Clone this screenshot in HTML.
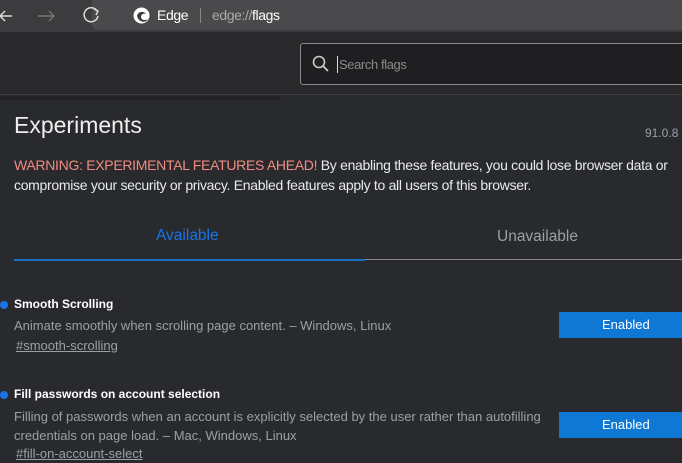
<!DOCTYPE html>
<html><head><style>
*{margin:0;padding:0;box-sizing:border-box}
body{width:682px;height:463px;overflow:hidden;background:#292a2d;font-family:"Liberation Sans",sans-serif;color:#e8eaed;position:relative}
.abs{position:absolute;white-space:nowrap}
#top{position:absolute;left:0;top:0;width:682px;height:32px;background:#3c3c3e}
#addr{position:absolute;left:92px;top:0;width:600px;height:30px;background:#4a4a4c;border-radius:0 0 0 6px}
#tb{position:absolute;left:0;top:32px;width:682px;height:63px;background:#29292b;border-bottom:1px solid #3c3c3e}
#search{position:absolute;left:300px;top:43px;width:390px;height:42px;border:1px solid #8a8a8c;border-radius:3px;background:#1f1f21}
.t{letter-spacing:-0.4px}
.btn{position:absolute;left:559px;width:130px;height:26px;background:#0f78d4;color:#fff;font-size:13px;line-height:26px;padding-left:43px}
.dot{position:absolute;left:0;width:8px;height:8px;border-radius:50%;background:#1a73e8}
.d{font-size:13px;color:#9aa0a6;letter-spacing:0}
</style></head><body>
<div id="top"></div>
<div id="addr"></div>
<svg class="abs" style="left:0;top:6px" width="110" height="20"><path d="M12 10H0M5 5L0 10 5 15" stroke="#ddd" stroke-width="1.4" fill="none"/><path d="M38 10H54M49 5L54 10 49 15" stroke="#777" stroke-width="1.4" fill="none"/><path d="M97 5A7 7 0 1 0 98 10" stroke="#ddd" stroke-width="1.5" fill="none"/><path d="M94 3L98 5 96 9" stroke="#ddd" stroke-width="1.4" fill="none"/></svg>
<svg class="abs" style="left:133px;top:7px" width="17" height="17"><circle cx="8.5" cy="8.5" r="8" fill="#fff"/><path d="M4 9a5 5 0 0 1 9-2c-2-1-5 0-5 3 0 3 4 4 7 2-2 4-9 4-11-3z" fill="#3c3c3e"/></svg>
<div class="abs t" style="left:157px;top:7px;font-size:14px;color:#fff">Edge</div>
<div class="abs" style="left:200px;top:8px;width:1px;height:15px;background:#888"></div>
<div class="abs t" style="left:212px;top:7px;font-size:14px;color:#aaa">edge://<span style="color:#fff">flags</span></div>
<div id="tb"></div>
<div class="abs" style="left:0;top:96px;width:280px;height:4px;background:#222224"></div>
<div id="search"></div>
<svg class="abs" style="left:312px;top:55px" width="18" height="18"><circle cx="7" cy="7" r="5.5" stroke="#ccc" stroke-width="1.6" fill="none"/><path d="M11 11L16 16" stroke="#ccc" stroke-width="1.8"/></svg>
<div class="abs" style="left:337px;top:56px;width:1px;height:17px;background:#ddd"></div>
<div class="abs t" style="left:339px;top:57px;font-size:13px;color:#8a8a8c">Search flags</div>
<div class="abs" style="left:14px;top:112px;font-size:23px;color:#eee">Experiments</div>
<div class="abs" style="left:645px;top:126px;font-size:12px;color:#9aa0a6">91.0.8</div>
<div class="abs" style="left:14px;top:155px;font-size:14px;line-height:20px;width:672px;white-space:normal;letter-spacing:-0.3px"><span style="color:#f28b82">WARNING: EXPERIMENTAL FEATURES AHEAD!</span> By enabling these features, you could lose browser data or compromise your security or privacy. Enabled features apply to all users of this browser.</div>
<div class="abs" style="left:156px;top:227px;font-size:15.5px;color:#1a73e8">Available</div>
<div class="abs" style="left:497px;top:228px;font-size:15.5px;color:#9aa0a6">Unavailable</div>
<div class="abs" style="left:14px;top:259px;width:351px;height:2px;background:#1a6fc4"></div>
<div class="abs" style="left:365px;top:259px;width:320px;height:1px;background:#888"></div>
<div class="dot" style="top:301px"></div>
<div class="abs" style="left:14px;top:297px;font-size:12px;font-weight:bold;color:#fff">Smooth Scrolling</div>
<div class="abs d" style="left:14px;top:318px">Animate smoothly when scrolling page content. – Windows, Linux</div>
<div class="abs d" style="left:16px;top:338px;text-decoration:underline">#smooth-scrolling</div>
<div class="btn" style="top:312px">Enabled</div>
<div class="dot" style="top:391px"></div>
<div class="abs" style="left:14px;top:387px;font-size:12px;font-weight:bold;color:#fff">Fill passwords on account selection</div>
<div class="abs d" style="left:14px;top:407px;line-height:19px">Filling of passwords when an account is explicitly selected by the user rather than autofilling<br>credentials on page load. – Mac, Windows, Linux</div>
<div class="abs d" style="left:16px;top:446px;text-decoration:underline">#fill-on-account-select</div>
<div class="btn" style="top:412px">Enabled</div>
</body></html>
